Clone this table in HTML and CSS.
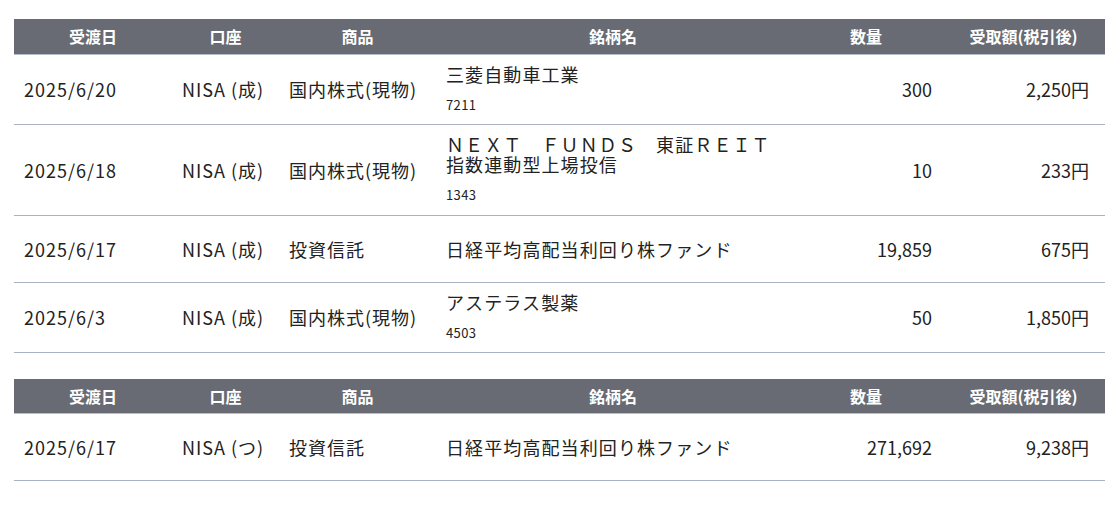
FILE: index.html
```html
<!DOCTYPE html>
<html lang="ja">
<head>
<meta charset="utf-8">
<link rel="stylesheet" href="styles.css">
</head>
<body>
<div class="page">
  <table class="tbl">
    <colgroup>
      <col class="c-date"><col class="c-acct"><col class="c-prod"><col class="c-name"><col class="c-qty"><col class="c-amt">
    </colgroup>
    <thead>
      <tr><th>受渡日</th><th>口座</th><th>商品</th><th>銘柄名</th><th>数量</th><th>受取額(税引後)</th></tr>
    </thead>
    <tbody>
      <tr>
        <td class="txt">2025/6/20</td><td class="txt">NISA (成)</td><td class="txt">国内株式(現物)</td>
        <td class="name"><div class="nm">三菱自動車工業</div><div class="code">7211</div></td>
        <td class="num">300</td><td class="num amt">2,250円</td>
      </tr>
      <tr>
        <td class="txt">2025/6/18</td><td class="txt">NISA (成)</td><td class="txt">国内株式(現物)</td>
        <td class="name multi"><div class="nm">ＮＥＸＴ　ＦＵＮＤＳ　東証ＲＥＩＴ指数連動型上場投信</div><div class="code">1343</div></td>
        <td class="num">10</td><td class="num amt">233円</td>
      </tr>
      <tr>
        <td class="txt">2025/6/17</td><td class="txt">NISA (成)</td><td class="txt">投資信託</td>
        <td class="name"><div class="nm">日経平均高配当利回り株ファンド</div></td>
        <td class="num">19,859</td><td class="num amt">675円</td>
      </tr>
      <tr>
        <td class="txt">2025/6/3</td><td class="txt">NISA (成)</td><td class="txt">国内株式(現物)</td>
        <td class="name"><div class="nm">アステラス製薬</div><div class="code">4503</div></td>
        <td class="num">50</td><td class="num amt">1,850円</td>
      </tr>
    </tbody>
  </table>

  <table class="tbl">
    <colgroup>
      <col class="c-date"><col class="c-acct"><col class="c-prod"><col class="c-name"><col class="c-qty"><col class="c-amt">
    </colgroup>
    <thead>
      <tr><th>受渡日</th><th>口座</th><th>商品</th><th>銘柄名</th><th>数量</th><th>受取額(税引後)</th></tr>
    </thead>
    <tbody>
      <tr>
        <td class="txt">2025/6/17</td><td class="txt">NISA (つ)</td><td class="txt">投資信託</td>
        <td class="name"><div class="nm">日経平均高配当利回り株ファンド</div></td>
        <td class="num">271,692</td><td class="num amt">9,238円</td>
      </tr>
    </tbody>
  </table>
</div>
</body>
</html>
```

FILE: styles.css
```css
html, body {
  margin: 0;
  padding: 0;
  background: #ffffff;
}
body {
  font-family: "Noto Sans CJK JP", "Noto Sans", sans-serif;
  color: #222222;
}
.page {
  padding: 19px 9px 0 14px;
  display: flex;
  flex-direction: column;
  gap: 26px;
}
.tbl {
  width: 1091px;
  border-collapse: collapse;
  table-layout: fixed;
}
.c-date { width: 158px; }
.c-acct { width: 107px; }
.c-prod { width: 157px; }
.c-name { width: 354px; }
.c-qty { width: 152px; }
.c-amt { width: 163px; }

.tbl th {
  background: #686b73;
  color: #ffffff;
  font-weight: bold;
  font-size: 16px;
  line-height: 20px;
  height: 35px;
  padding: 0 10px;
  box-sizing: border-box;
  text-align: center;
  border-bottom: 1px solid #b3bdd0;
}
.tbl td {
  font-size: 18px;
  line-height: 20px;
  padding: 23px 10px;
  vertical-align: middle;
  border-bottom: 1px solid #a9b3c6;
  white-space: nowrap;
}
.tbl td.txt {
  letter-spacing: 1px;
}
.tbl td.name {
  white-space: normal;
  padding: 9px 10px 9px;
}
.tbl td.name.multi {
  padding-bottom: 10px;
}
.nm {
  font-size: 18px;
  letter-spacing: 1.1px;
  line-height: 20px;
}
.code {
  font-size: 13px;
  letter-spacing: 0.4px;
  line-height: 20px;
  margin-top: 11px;
}
.tbl td.num {
  text-align: right;
}
.tbl td.amt {
  padding-right: 16px;
}
```
